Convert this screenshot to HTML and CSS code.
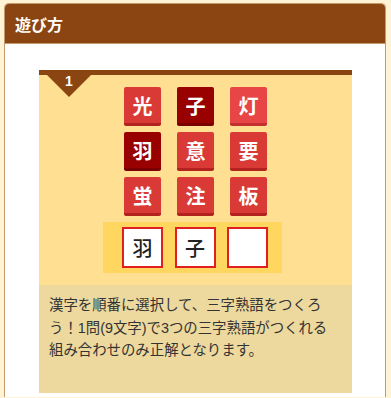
FILE: index.html
```html
<!DOCTYPE html>
<html lang="ja">
<head>
<meta charset="utf-8">
<link rel="stylesheet" href="styles.css">
</head>
<body>
<section class="card">
  <h2 class="card-title">遊び方</h2>
  <div class="card-body">
    <div class="step">
      <span class="step-num">1</span>
      <div class="board">
        <div class="grid">
          <span class="tile">光</span>
          <span class="tile dark">子</span>
          <span class="tile light">灯</span>
          <span class="tile dark">羽</span>
          <span class="tile">意</span>
          <span class="tile">要</span>
          <span class="tile">蛍</span>
          <span class="tile">注</span>
          <span class="tile">板</span>
        </div>
        <div class="answer">
          <span class="slot">羽</span>
          <span class="slot">子</span>
          <span class="slot"></span>
        </div>
      </div>
      <p class="step-text">漢字を順番に選択して、三字熟語をつくろう！1問(9文字)で3つの三字熟語がつくれる組み合わせのみ正解となります。</p>
    </div>
  </div>
</section>
</body>
</html>
```

FILE: styles.css
```css
html, body {
  margin: 0;
  padding: 0;
  background: #fff3d6;
  font-family: "Noto Sans CJK JP", "Noto Sans", sans-serif;
}
.card {
  margin: 3px 5px 0 4px;
  border: 1px solid #c49a6c;
  border-bottom: none;
  border-radius: 5px 5px 0 0;
  background: #fff;
  overflow: hidden;
}
.card-title {
  margin: 0;
  height: 40px;
  box-sizing: border-box;
  padding: 9px 0 0 10px;
  background: #8b4513;
  border-bottom: 1px solid #c49a6c;
  color: #fff;
  font-size: 16px;
  font-weight: bold;
  line-height: 22px;
}
.card-body {
  padding: 26px 33px 4px 34px;
}
.step {
  position: relative;
  border-top: 5px solid #8b4513;
  background: #ffdf91;
  padding-top: 12px;
}
.step-num {
  position: absolute;
  top: 0;
  left: 8px;
  width: 44px;
  height: 22px;
  background: #8b4513;
  clip-path: polygon(0 0, 100% 0, 50% 100%);
  color: #fff;
  text-align: center;
  font-family: "Liberation Sans", sans-serif;
  font-size: 14px;
  font-weight: bold;
  line-height: 13px;
}
.board {
  display: flex;
  flex-direction: column;
  align-items: center;
}
.grid {
  display: grid;
  grid-template-columns: repeat(3, 37px);
  column-gap: 16px;
  row-gap: 6px;
}
.tile {
  display: flex;
  align-items: center;
  justify-content: center;
  height: 36px;
  background: #d93a36;
  border-bottom: 3px solid #b2221f;
  border-radius: 2px;
  color: #fff;
  font-size: 20px;
  font-weight: bold;
}
.tile.dark {
  background: #990000;
  border-bottom-color: #7a0000;
}
.tile.light {
  background: #e84646;
  border-bottom-color: #c43030;
}
.answer {
  display: flex;
  gap: 11.5px;
  margin: 6px 6px 0 0;
  padding: 5px 14px 5px 19px;
  background: #ffd660;
}
.slot {
  display: flex;
  align-items: center;
  justify-content: center;
  width: 41px;
  height: 41px;
  box-sizing: border-box;
  background: #fff;
  border: 2px solid #e02020;
  color: #222;
  font-size: 20px;
  font-weight: 500;
}
.step-text {
  margin: 12px 0 0;
  padding: 9px 23px 31px 10px;
  background: #edd89e;
  color: #333;
  font-family: "Liberation Sans", "Noto Sans CJK JP", sans-serif;
  font-size: 14.4px;
  line-height: 22.5px;
}
```
